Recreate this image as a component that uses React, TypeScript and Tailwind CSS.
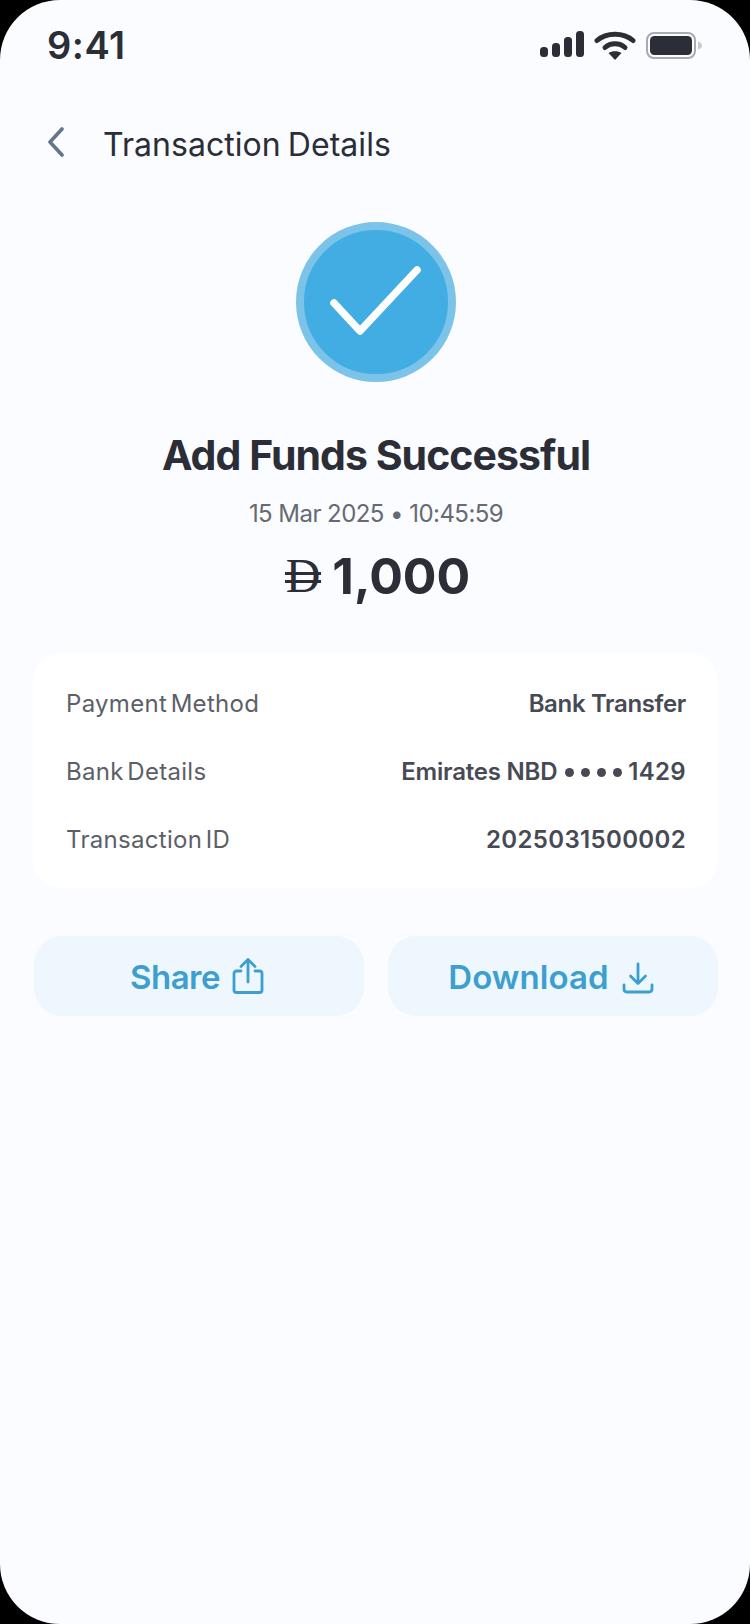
import React from "react";

function StatusIcons() {
  return (
    <div className="flex items-center gap-[10px]">
      <svg width="44" height="28" viewBox="0 0 44 28" fill="#2b2d37" className="block">
        <rect x="0" y="16" width="8" height="10" rx="3.5" />
        <rect x="12" y="12" width="8" height="14" rx="3.5" />
        <rect x="24" y="6" width="8" height="20" rx="3.5" />
        <rect x="36" y="0" width="8" height="26" rx="3.5" />
      </svg>
      <svg width="42" height="30" viewBox="0 0 42 30" fill="none" className="block">
        <path d="M3 10.5C12.5 2 29.5 2 39 10.5" stroke="#2b2d37" strokeWidth="5" strokeLinecap="round" />
        <path d="M11 17.5C16.5 12.5 25.5 12.5 31 17.5" stroke="#2b2d37" strokeWidth="5" strokeLinecap="round" />
        <path d="M14.5 23C18 20.5 24 20.5 27.5 23L21 30Z" fill="#2b2d37" />
      </svg>
      <svg width="58" height="30" viewBox="0 0 58 30" fill="none" className="block">
        <rect x="1" y="3" width="48" height="25" rx="7" stroke="#a9abb1" strokeWidth="2" />
        <rect x="4" y="6" width="42" height="19" rx="4.5" fill="#2b2d37" />
        <path d="M52 11.5C54.5 12 56 13.5 56 15.5C56 17.5 54.5 19 52 19.5Z" fill="#c9cbd0" />
      </svg>
    </div>
  );
}

function Row({ label, value, valueClass }: { label: string; value: React.ReactNode; valueClass: string }) {
  return (
    <div className="flex items-center justify-between h-[34px]">
      <span className="text-[24px] text-[#5c5f69] tracking-[0.3px] [word-spacing:-3.5px]">{label}</span>
      <span className={`text-[24px] font-semibold text-[#474a55] flex items-center ${valueClass}`}>{value}</span>
    </div>
  );
}

function Dots() {
  return (
    <span className="flex items-center gap-[7px] ml-[8px] mr-[6px]">
      <span className="w-[9px] h-[9px] rounded-full bg-[#474a55]" />
      <span className="w-[9px] h-[9px] rounded-full bg-[#474a55]" />
      <span className="w-[9px] h-[9px] rounded-full bg-[#474a55]" />
      <span className="w-[9px] h-[9px] rounded-full bg-[#474a55]" />
    </span>
  );
}

export default function App() {
  return (
    <div className="w-[750px] h-[1624px] bg-black overflow-hidden" style={{ fontFamily: "Inter, 'Noto Sans', sans-serif" }}>
      <div className="w-full h-full bg-[#fafcff] rounded-[60px] flex flex-col">
        <div className="flex items-center justify-between pt-[28px] pl-[47px] pr-[46px] h-[62px]">
          <span className="text-[38px] leading-[38px] font-semibold text-[#2b2d37] tracking-[0.5px]">9:41</span>
          <StatusIcons />
        </div>

        <div className="flex items-center mt-[61px] pl-[45px] gap-[38px] h-[44px]">
          <svg width="20" height="30" viewBox="0 0 20 30" fill="none" className="block mb-[6px]">
            <path d="M17 2L5 15L17 28" stroke="#64748b" strokeWidth="3.6" strokeLinecap="round" strokeLinejoin="round" />
          </svg>
          <span className="text-[32px] leading-[44px] text-[#2b2d37] tracking-[0.05px] [word-spacing:-2px]">Transaction Details</span>
        </div>

        <div className="flex flex-col items-center mt-[55px] pl-[2px]">
          <div className="w-[160px] h-[160px] rounded-full bg-[#41ade3] border-[8px] border-[#7cc3ea] flex items-center justify-center">
            <svg width="98" height="76" viewBox="0 0 98 76" fill="none" className="block">
              <path d="M7 39L33 67L90 6" stroke="#ffffff" strokeWidth="7.5" strokeLinecap="round" strokeLinejoin="round" />
            </svg>
          </div>
          <h1 className="mt-[45px] text-[41px] leading-[56px] font-bold text-[#2b2d37] tracking-[-0.95px]">Add Funds Successful</h1>
          <p className="mt-[14px] text-[24px] leading-[34px] text-[#666a73] tracking-[-0.55px]">15 Mar 2025 • 10:45:59</p>
          <div className="mt-[14px] flex items-center gap-[12px] h-[62px] pl-[4px]">
            <span className="relative text-[48px] leading-[50px] text-[#2b2d37] font-normal" style={{ fontFamily: "'Liberation Serif', serif" }}>
              D
              <span className="absolute left-[-1px] right-[-1px] top-[21px] h-[3px] bg-[#2b2d37]" />
              <span className="absolute left-[-1px] right-[-1px] top-[29px] h-[3px] bg-[#2b2d37]" />
            </span>
            <span className="text-[50px] leading-[62px] font-bold text-[#2b2d37] tracking-[0px]">1,000</span>
          </div>
        </div>

        <div className="ml-[33px] mr-[32px] mt-[46px] bg-white rounded-[28px] pl-[33px] pr-[32px] pt-[34px] pb-[31px] flex flex-col gap-[34px]">
          <Row label="Payment Method" value="Bank Transfer" valueClass="tracking-[-0.35px]" />
          <Row
            label="Bank Details"
            value={
              <>
                <span className="tracking-[-0.2px]">Emirates NBD</span>
                <Dots />
                <span className="tracking-[0.3px]">1429</span>
              </>
            }
            valueClass=""
          />
          <Row label="Transaction ID" value="2025031500002" valueClass="tracking-[0.35px]" />
        </div>

        <div className="ml-[34px] mr-[32px] mt-[48px] grid grid-cols-2 gap-[24px]">
          <div className="h-[80px] rounded-[28px] bg-[#edf7fd] flex items-center justify-center gap-[12px] pr-[4px]">
            <span className="text-[33px] font-semibold text-[#3d9fd0] tracking-[-0.5px] pt-[3px]">Share</span>
            <svg width="32" height="38" viewBox="0 0 32 38" fill="none" className="block">
              <path d="M9 14H4.5C3 14 2 15 2 16.5V33C2 34.5 3 35.5 4.5 35.5H27.5C29 35.5 30 34.5 30 33V16.5C30 15 29 14 27.5 14H23" stroke="#3d9fd0" strokeWidth="2.8" strokeLinecap="round" />
              <path d="M16 25V3M9 9.5L16 2.5L23 9.5" stroke="#3d9fd0" strokeWidth="2.8" strokeLinecap="round" strokeLinejoin="round" />
            </svg>
          </div>
          <div className="h-[80px] rounded-[28px] bg-[#edf7fd] flex items-center justify-center gap-[13px] pr-[4px]">
            <span className="text-[33px] font-semibold text-[#3d9fd0] tracking-[0.05px] pt-[3px]">Download</span>
            <svg width="32" height="32" viewBox="0 0 32 32" fill="none" className="block mt-[3px]">
              <path d="M16 2V21M8.5 14L16 21.5L23.5 14" stroke="#3d9fd0" strokeWidth="2.8" strokeLinecap="round" strokeLinejoin="round" />
              <path d="M2 23V27C2 29 3 30 5 30H27C29 30 30 29 30 27V23" stroke="#3d9fd0" strokeWidth="2.8" strokeLinecap="round" />
            </svg>
          </div>
        </div>
      </div>
    </div>
  );
}
